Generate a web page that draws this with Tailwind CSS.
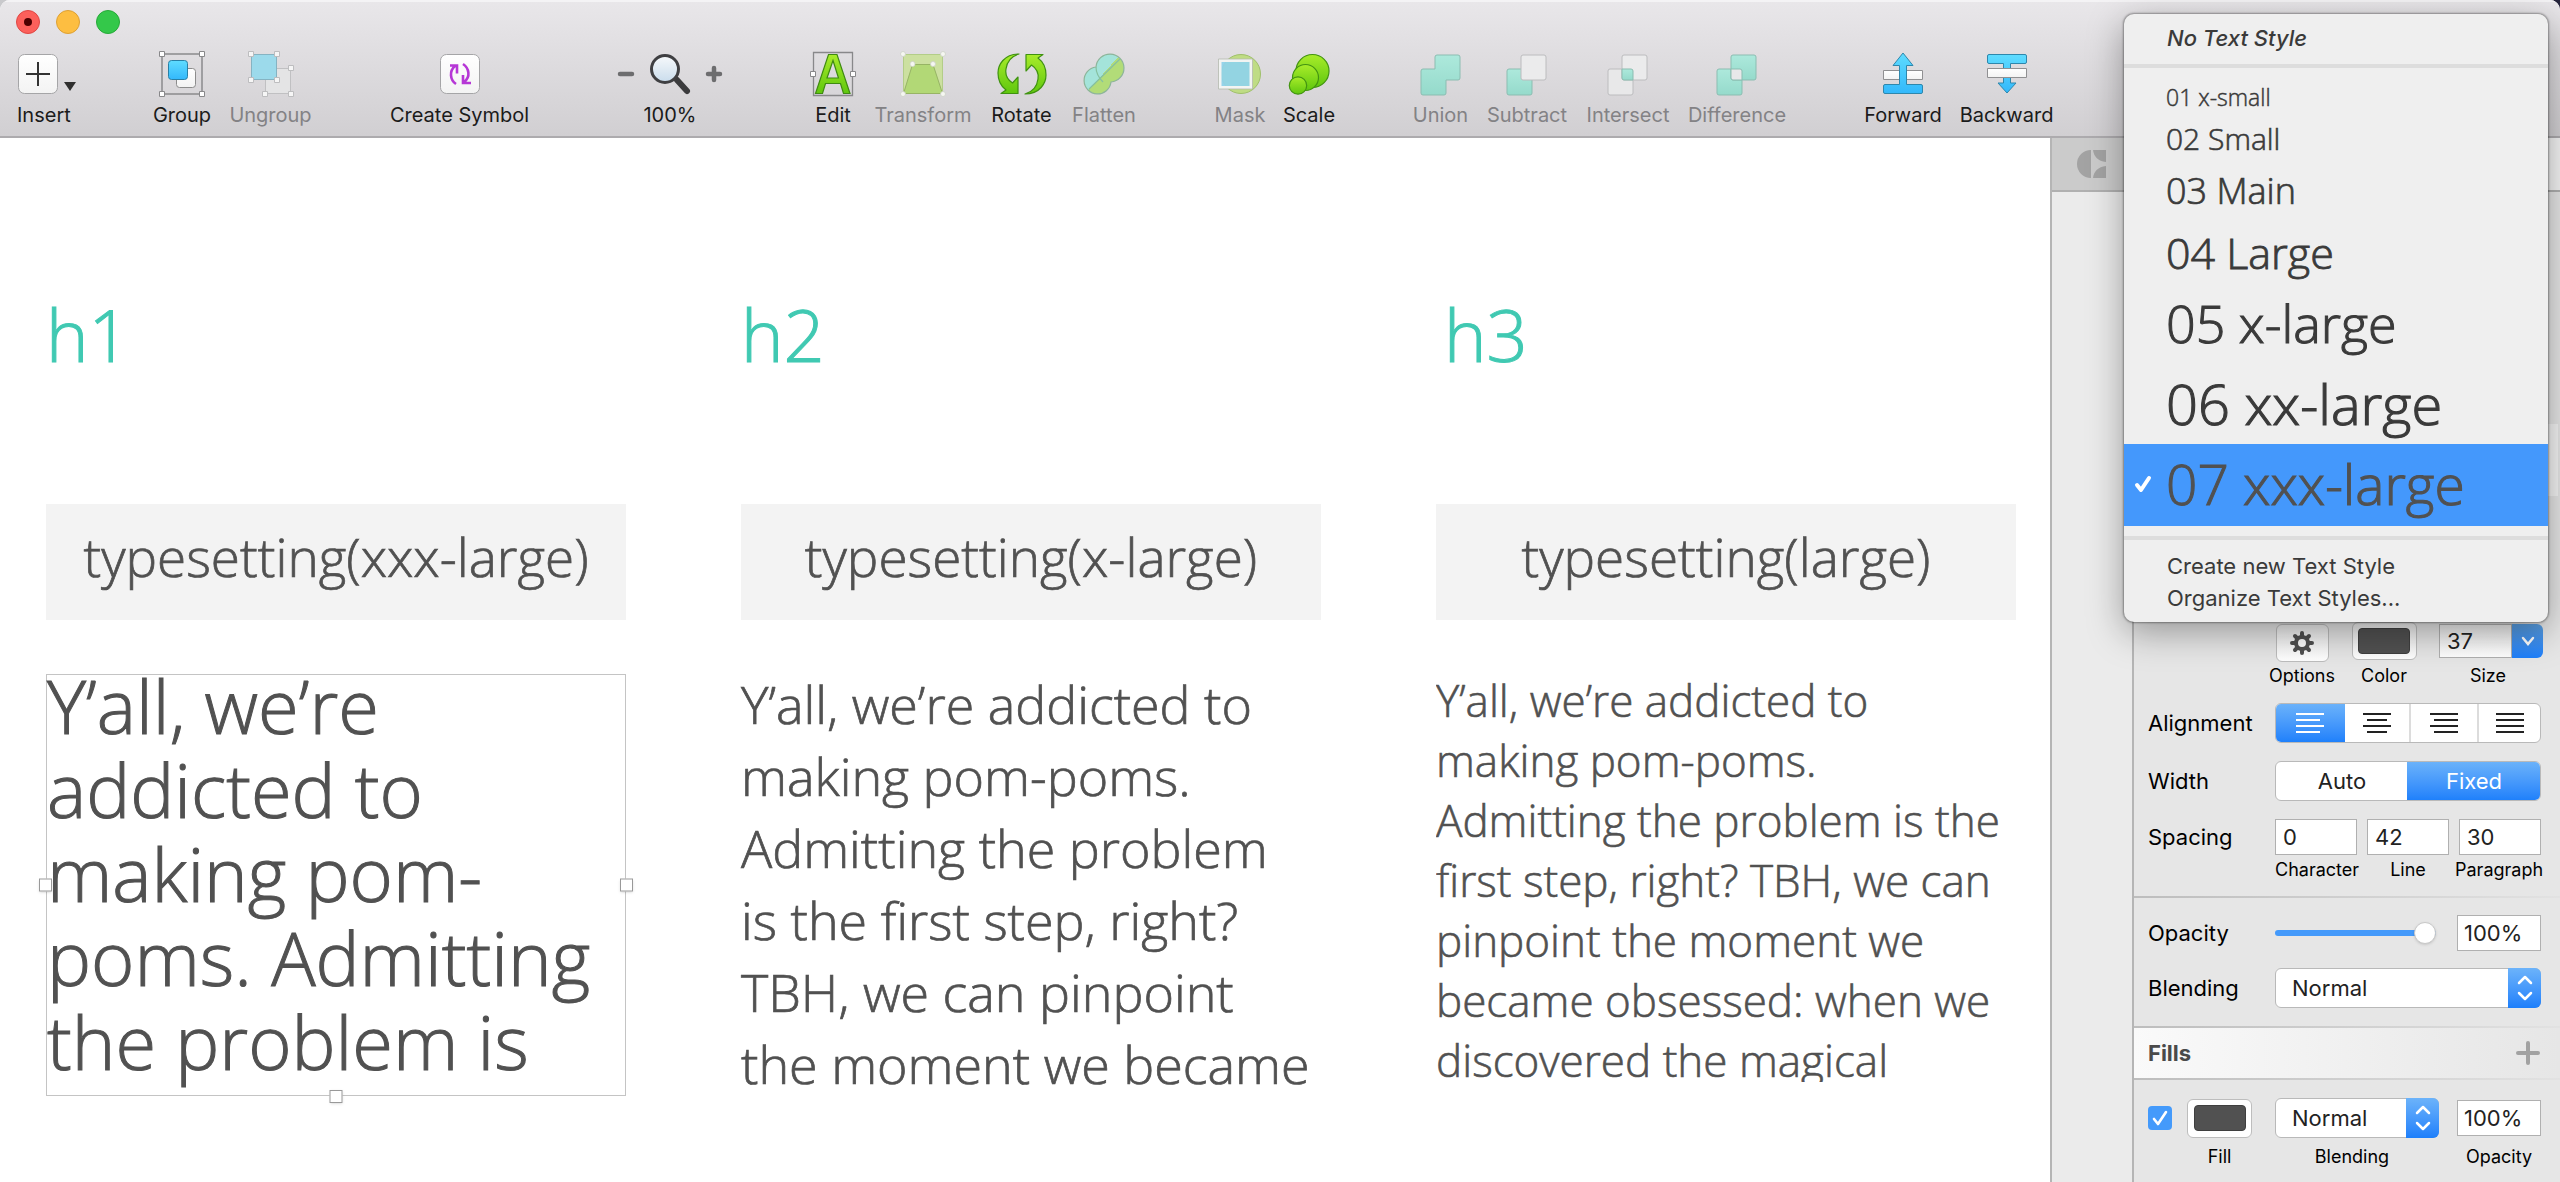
<!DOCTYPE html>
<html lang="en">
<head>
<meta charset="utf-8">
<title>Typesetting styles</title>
<script src="https://cdn.jsdelivr.net/npm/@tailwindcss/browser@4"></script>
</head>
<body class="bg-gradient-to-r from-[#c9c9cc] to-[#25233a] font-['Inter',sans-serif] text-[#1b1b1b]">
<svg width="0" height="0" class="absolute" aria-hidden="true">
  <defs>
    <linearGradient id="green" x1="0" y1="0" x2="0" y2="1"><stop offset="0" stop-color="#a8ec2a"/><stop offset="1" stop-color="#5fc70e"/></linearGradient>
    <linearGradient id="blue" x1="0" y1="0" x2="0" y2="1"><stop offset="0" stop-color="#5fdcff"/><stop offset="1" stop-color="#33b8fb"/></linearGradient>
    <linearGradient id="teal" x1="0" y1="0" x2="0" y2="1"><stop offset="0" stop-color="#ade9dc"/><stop offset="1" stop-color="#95dacb"/></linearGradient>
    <linearGradient id="white" x1="0" y1="0" x2="0" y2="1"><stop offset="0" stop-color="#ffffff"/><stop offset="1" stop-color="#f3f3f3"/></linearGradient>
    <linearGradient id="lens" x1="0" y1="0" x2="0" y2="1"><stop offset="0" stop-color="#f7f9fb"/><stop offset="1" stop-color="#c9dcec"/></linearGradient>
  </defs>
</svg>
<div class="relative flex min-h-screen flex-col overflow-hidden rounded-t-[10px] bg-white">

  <header class="h-[138px] border-b-2 border-[#adabae] bg-gradient-to-b from-[#e9e7ea] to-[#d1cfd2]">
    <div class="flex h-[44px] items-center gap-4 border-t-2 border-[#f4f3f5] pb-[2px] pl-4">
      <button aria-label="Close" class="flex size-6 items-center justify-center rounded-full border border-[#df4744] bg-[#fc605b]"><span class="size-2 rounded-full bg-[#4d0000]"></span></button>
      <button aria-label="Minimize" class="size-6 rounded-full border border-[#dda034] bg-[#fdbe41]"></button>
      <button aria-label="Zoom window" class="size-6 rounded-full border border-[#27a939] bg-[#34c84a]"></button>
    </div>
    <nav class="flex gap-[78px] pl-[17px] text-[20px] leading-6 whitespace-nowrap">
      <div class="flex w-[57px]">
        <button class="flex flex-col items-start gap-[3px]">
          <svg width="62" height="56" viewBox="17 44 62 56"><rect x="18.500" y="54.500" width="39" height="39" rx="6" fill="url(#white)" stroke="#a5a5a7"/><path d="M26 74h24M38 62v24" stroke="#333" stroke-width="2"/><path d="M64 82h12l-6 9z" fill="#2f2f2f"/></svg>
          <span>Insert</span>
        </button>
      </div>
      <div class="flex gap-[18px]">
        <button class="flex w-[60px] flex-col items-center gap-[3px]">
          <svg width="46" height="56" viewBox="159 44 46 56"><path d="M162 54h40v40h-40z" fill="none" stroke="#8a8a8c" stroke-width="1.500"/><rect x="176.500" y="68.500" width="19" height="19" rx="3" fill="url(#white)" stroke="#8c8c8c"/><rect x="168.500" y="60.500" width="19" height="19" rx="3" fill="url(#blue)" stroke="#2880a6"/><g fill="#fff" stroke="#88888a"><path d="M159.500 51.500h5v5h-5zM199.500 51.500h5v5h-5zM159.500 91.500h5v5h-5zM199.500 91.500h5v5h-5z"/></g></svg>
          <span>Group</span>
        </button>
        <button class="flex w-[81px] flex-col items-center gap-[3px] text-[#838285]">
          <svg width="46" height="56" viewBox="247 44 46 56"><rect x="264.500" y="68.500" width="25" height="25" fill="#e4e4e5" stroke="#c0c0c2"/><rect x="250.500" y="54.500" width="25" height="25" fill="#9cdaeb" stroke="#86b3c2"/><g fill="#f6f6f6" stroke="#bdbdbf"><path d="M247.500 51.500h5v5h-5zM273.500 51.500h5v5h-5zM247.500 77.500h5v5h-5zM273.500 77.500h5v5h-5zM287.500 65.500h5v5h-5zM261.500 91.500h5v5h-5zM287.500 91.500h5v5h-5z"/></g></svg>
          <span>Ungroup</span>
        </button>
      </div>
      <button class="flex w-[141px] flex-col items-center gap-[3px]">
        <svg width="42" height="56" viewBox="439 44 42 56"><rect x="440.500" y="54.500" width="39" height="39" rx="6" fill="url(#white)" stroke="#a5a5a7"/><g fill="none" stroke="#b637d6" stroke-width="2.600"><path d="M456 84c-6-4-7-13-1-18M450 65.500h7v8M463 64c6 4 8 13 1 18M471 83h-8v-8"/></g></svg>
        <span>Create Symbol</span>
      </button>
      <div class="flex w-[124px] flex-col items-center gap-[3px]">
        <svg width="108" height="56" viewBox="616 44 108 56"><path d="M620 74h12M708 74h12M714 68v12" stroke="#6d6d6f" stroke-width="4.500" stroke-linecap="round"/><path d="M677 80l10 11" stroke="#3b3b3d" stroke-width="6" stroke-linecap="round"/><circle cx="665" cy="69" r="13.500" fill="url(#lens)" stroke="#3f3f42" stroke-width="3"/></svg>
        <span>100%</span>
      </div>
      <div class="flex gap-[18px]">
        <button class="flex w-[46px] flex-col items-center gap-[3px]">
          <svg width="46" height="56" viewBox="811 44 46 56"><path d="M814.500 52.500h39v43h-39z" fill="none" stroke="#88888a" stroke-width="1.300"/><path d="M816.500 93.500L829.500 54.500h8.500l13 39h-6.500l-3-10h-15l-3 10zM828 78h11.500l-5.500-17.500z" fill="url(#green)" stroke="#3f8a12" stroke-width="1.200"/><path d="M811.500 71.500h5v5h-5zM851.500 71.500h5v5h-5z" fill="#fff" stroke="#88888a"/></svg>
          <span>Edit</span>
        </button>
        <button class="flex w-[98px] flex-col items-center gap-[3px] text-[#838285]">
          <svg width="46" height="56" viewBox="901 44 46 56"><path d="M904.500 54.500h39v39h-39z" fill="#cce0a0" stroke="#b3cd88"/><path d="M913.500 64.500h20.500l9.500 29h-39z" fill="#b2d876" stroke="#97b465"/><g fill="#f6f7f2" stroke="#cdd2c8" stroke-width=".8"><circle cx="904" cy="54" r="2.500"/><circle cx="944" cy="54" r="2.500"/><circle cx="904" cy="94" r="2.500"/><circle cx="944" cy="94" r="2.500"/><circle cx="913.500" cy="64" r="2.500"/><circle cx="934" cy="64" r="2.500"/></g></svg>
          <span>Transform</span>
        </button>
        <button class="flex w-[63px] flex-col items-center gap-[3px]">
          <svg width="50" height="56" viewBox="997 44 50 56"><g fill="url(#green)" stroke="#3f9210" stroke-width="1.200" stroke-linejoin="round"><path d="M1019 54C1004 54 998 65 998 73C998 81 1002 87 1006 90L1001 93.500H1018V77L1012.500 83C1008 80 1005 75 1006 69C1007 61 1012 56 1019 54Z"/><path d="M1025 94C1040 94 1046 83 1046 75C1046 67 1042 61 1038 58L1043 54.500H1026V71L1031.500 65C1036 68 1039 73 1038 79C1037 87 1032 92 1025 94Z"/></g></svg>
          <span>Rotate</span>
        </button>
        <button class="flex w-[66px] flex-col items-center gap-[3px] text-[#838285]">
          <svg width="42" height="56" viewBox="1083 44 42 56"><defs><linearGradient id="split" gradientUnits="userSpaceOnUse" x1="1094" y1="66" x2="1112" y2="82"><stop offset=".5" stop-color="#a4e4da"/><stop offset=".5" stop-color="#b2dc78"/></linearGradient></defs><path d="M1096 67a14 14 0 1 1 15 15a13.500 13.500 0 1 1-15-15z" fill="url(#split)" stroke="#8db59a" stroke-width="1.200"/><path d="M1096 67c0 7 3 11 7 15M1089 89l31-30" fill="none" stroke="#86c0a0" stroke-width="1.200"/></svg>
          <span>Flatten</span>
        </button>
      </div>
      <div class="flex gap-[18px]">
        <button class="flex w-[50px] flex-col items-center gap-[3px] text-[#838285]">
          <svg width="44" height="56" viewBox="1219 44 44 56"><circle cx="1242" cy="74" r="19.500" fill="#bfdc84" stroke="#9fc06b"/><path d="M1221 60.500h31v27h-31z" fill="#8fd3ea" fill-opacity=".92" stroke="#f2f4f2" stroke-width="3"/><path d="M1219.500 59h34v30h-34z" fill="none" stroke="#b4b9ae" stroke-width=".8"/></svg>
          <span>Mask</span>
        </button>
        <button class="flex w-[52px] flex-col items-center gap-[3px]">
          <svg width="42" height="56" viewBox="1289 44 42 56"><g fill="url(#green)" stroke="#439412" stroke-width="1.200"><circle cx="1313.500" cy="71" r="16.500"/><circle cx="1306.500" cy="77.500" r="13"/><circle cx="1299" cy="85.500" r="8.700"/></g></svg>
          <span>Scale</span>
        </button>
      </div>
      <div class="flex gap-[18px] text-[#838285]">
        <button class="flex w-[55px] flex-col items-center gap-[3px]">
          <svg width="42" height="56" viewBox="0 -11 42 56"><path d="M15 2a2 2 0 0 1 2-2H38a2 2 0 0 1 2 2V23a2 2 0 0 1-2 2H26V38a2 2 0 0 1-2 2H3a2 2 0 0 1-2-2V16a2 2 0 0 1 2-2H15z" fill="url(#teal)" stroke="#8bbdb1"/></svg>
          <span>Union</span>
        </button>
        <button class="flex w-[82px] flex-col items-center gap-[3px]">
          <svg width="42" height="56" viewBox="0 -11 42 56"><rect x="1" y="14" width="25" height="26" rx="2" fill="url(#teal)" stroke="#8bbdb1"/><rect x="15" y="0" width="25" height="25" rx="2" fill="#ebebec" stroke="#bcbcbe"/></svg>
          <span>Subtract</span>
        </button>
        <button class="flex w-[84px] flex-col items-center gap-[3px]">
          <svg width="42" height="56" viewBox="0 -11 42 56"><rect x="1" y="14" width="25" height="26" rx="2" fill="#e8e8e9" stroke="#bcbcbe"/><rect x="15" y="0" width="25" height="25" rx="2" fill="#ebebec" stroke="#bcbcbe"/><path d="M15 14h9a2 2 0 0 1 2 2v9h-9a2 2 0 0 1-2-2z" fill="url(#teal)" stroke="#8bbdb1"/></svg>
          <span>Intersect</span>
        </button>
        <button class="flex w-[98px] flex-col items-center gap-[3px]">
          <svg width="42" height="56" viewBox="0 -11 42 56"><rect x="1" y="14" width="25" height="26" rx="2" fill="url(#teal)" stroke="#8bbdb1"/><rect x="15" y="0" width="25" height="25" rx="2" fill="url(#teal)" stroke="#8bbdb1"/><path d="M15 14h9a2 2 0 0 1 2 2v9h-9a2 2 0 0 1-2-2z" fill="#e8e8e9" stroke="#8bbdb1"/></svg>
          <span>Difference</span>
        </button>
      </div>
      <div class="flex gap-[18px]">
        <button class="flex w-[78px] flex-col items-center gap-[3px]">
          <svg width="42" height="56" viewBox="1883 44 42 56"><path d="M1884.500 70.500h39v9h-39z" fill="url(#white)" stroke="#909092"/><path d="M1904 53l10 12.500h-6.500V84.500H1922a1.500 1.500 0 0 1 1.500 1.500v6a1.500 1.500 0 0 1-1.500 1.500h-36a1.500 1.500 0 0 1-1.500-1.500v-6a1.500 1.500 0 0 1 1.500-1.500h14.500V65.500h-6.500z" fill="url(#blue)" stroke="#2e87ac"/></svg>
          <span>Forward</span>
        </button>
        <button class="flex w-[93px] flex-col items-center gap-[3px]">
          <svg width="42" height="56" viewBox="1987 44 42 56"><path d="M1990 54.500h36a1.500 1.500 0 0 1 1.500 1.500v6a1.500 1.500 0 0 1-1.500 1.500h-14.500V83h5.500l-9 10-9-10h5.500V63.500H1990a1.500 1.500 0 0 1-1.500-1.500v-6a1.500 1.500 0 0 1 1.500-1.500z" fill="url(#blue)" stroke="#2e87ac"/><path d="M1988.500 68.500h39v9h-39z" fill="url(#white)" stroke="#909092"/></svg>
          <span>Backward</span>
        </button>
      </div>
    </nav>
  </header>

  <div class="flex flex-1">
    <main class="grid flex-1 grid-cols-3 gap-[115px] pt-[154px] pr-[34px] pl-[46px] font-['Open_Sans',sans-serif] font-light whitespace-nowrap text-[#515151] [-webkit-text-stroke:0.014em]">
      <section>
        <h1 class="text-[72px] leading-[84px] text-[#40c9b2] [-webkit-text-stroke:0.014em]">h1</h1>
        <div class="mt-[128px] flex h-[116px] items-center justify-center bg-[#f3f3f3] pb-[10px] text-[53px] [-webkit-text-stroke:0.014em]">typesetting(xxx-large)</div>
        <div class="relative mt-[54px] h-[422px] border border-[#c4c4c4] text-[74px] leading-[84px] [-webkit-text-stroke:0.014em]">
          <i class="absolute top-1/2 -left-2 size-[13px] -translate-y-1/2 border border-[#999] bg-white shadow"></i>
          <i class="absolute top-1/2 -right-2 size-[13px] -translate-y-1/2 border border-[#999] bg-white shadow"></i>
          <i class="absolute -bottom-2 left-1/2 size-[13px] -translate-x-1/2 border border-[#999] bg-white shadow"></i>
          <p class="relative -mt-[11px]">Y’all, we’re<br>addicted to<br>making pom-<br>poms. Admitting<br>the problem is</p>
        </div>
      </section>
      <section>
        <h2 class="text-[72px] leading-[84px] text-[#40c9b2] [-webkit-text-stroke:0.014em]">h2</h2>
        <div class="mt-[128px] flex h-[116px] items-center justify-center bg-[#f3f3f3] pb-[10px] text-[53px] [-webkit-text-stroke:0.014em]">typesetting(x-large)</div>
        <p class="mt-12 text-[52px] leading-[72px] [-webkit-text-stroke:0.014em]">Y’all, we’re addicted to<br>making pom-poms.<br>Admitting the problem<br>is the first step, right?<br>TBH, we can pinpoint<br>the moment we became</p>
      </section>
      <section>
        <h3 class="pl-2 text-[72px] leading-[84px] text-[#40c9b2] [-webkit-text-stroke:0.014em]">h3</h3>
        <div class="mt-[128px] flex h-[116px] items-center justify-center bg-[#f3f3f3] pb-[10px] text-[53px] [-webkit-text-stroke:0.014em]">typesetting(large)</div>
        <p class="mt-[50px] h-[412px] overflow-hidden text-[44px] leading-[60px] [-webkit-text-stroke:0.014em]">Y’all, we’re addicted to<br>making pom-poms.<br>Admitting the problem is the<br>first step, right? TBH, we can<br>pinpoint the moment we<br>became obsessed: when we<br>discovered the magical</p>
      </section>
    </main>

    <aside class="flex w-[510px] flex-col border-l-2 border-[#b5b5b5] bg-[#ebebeb]">
      <div class="flex h-[54px] items-center justify-between border-b-2 border-[#b0b0b0] bg-[#cbcbcb]">
        <svg width="30" height="30" viewBox="0 0 30 30" class="ml-[25px]" fill="#a3a3a3"><path d="M14 1v28A14 14 0 0 1 14 1zM16 1h13v12C21 12 17 8 16 1zM16 29h13V17C21 18 17 22 16 29z"/></svg>
        <div class="h-[52px] w-24 bg-[#f4f4f4]"></div>
      </div>
      <div class="flex flex-1 pl-[80px]">
        <div class="flex-1 border-l-2 border-[#b5b5b5] bg-[#e6e6e6] text-[22px] leading-7 text-black">
          <div class="flex h-[430px] justify-end pt-[232px] pr-[2px]"><div class="h-[72px] w-24 bg-[#f4f4f4]"></div></div>

          <div class="flex justify-end pr-[17px] text-[18px] leading-6">
            <div class="flex w-[84px] flex-col items-center gap-[2px]">
              <button id="opts" aria-label="Options" class="mt-[2px] flex h-[38px] w-[53px] items-center justify-center rounded-md border border-[#bdbdbd] bg-gradient-to-b from-[#ededed] to-white">
                <svg width="26" height="26" viewBox="-13 -13 26 26"><g stroke="#505050" stroke-width="4" stroke-linecap="round"><path d="M0-10V10M-10 0H10M-7-7L7 7M-7 7L7-7"/></g><circle r="6" fill="#fdfdfd" stroke="#505050" stroke-width="4"/></svg>
              </button>
              <label for="opts">Options</label>
            </div>
            <div class="flex w-[80px] flex-col items-center gap-1">
              <button id="color" aria-label="Color" class="flex h-[38px] w-[65px] items-center justify-center rounded-md border border-[#bdbdbd] bg-gradient-to-b from-[#ededed] to-white"><span class="h-[26px] w-[52px] rounded border border-[#3f3f3f] bg-[#515151]"></span></button>
              <label for="color">Color</label>
            </div>
            <div class="ml-[15px] flex w-[104px] flex-col items-center gap-[6px]">
              <div class="mt-[2px] flex h-[34px] w-full">
                <input id="size" value="37" class="w-[73px] border border-[#b0b0b0] bg-gradient-to-b from-[#ececec] to-white pl-[7px] text-[22px] text-[#222]">
                <button aria-label="Choose size" class="flex flex-1 items-center justify-center rounded-r-md bg-gradient-to-b from-[#5a9ee0] to-[#1c7ffb]"><svg width="14" height="10" viewBox="0 0 14 10" fill="none" stroke="#fff" stroke-width="2.500" stroke-linecap="round"><path d="M2 2l5 6 5-6"/></svg></button>
              </div>
              <label for="size" class="-ml-[6px]">Size</label>
            </div>
          </div>

          <div class="mt-[15px] grid grid-cols-[127px_1fr] items-center gap-y-[18px] pr-[19px] pl-[14px]">
            <span>Alignment</span>
            <div class="grid h-10 grid-cols-[68px_67px_68px_1fr] overflow-hidden rounded-md border border-[#b9b9b9] bg-white">
              <button aria-label="Left" class="-m-px flex items-center justify-center bg-gradient-to-b from-[#6cb3fa] to-[#1c7ffb]"><svg width="28" height="22" stroke="#fff" stroke-width="2"><path d="M0 2h28M0 8h24M0 14h28M0 20h24"/></svg></button>
              <button aria-label="Center" class="flex items-center justify-center border-r-2 border-[#dcdcdc]"><svg width="28" height="22" stroke="#222" stroke-width="2"><path d="M0 2h28M4 8h20M0 14h28M4 20h20"/></svg></button>
              <button aria-label="Right" class="flex items-center justify-center border-r-2 border-[#dcdcdc]"><svg width="28" height="22" stroke="#222" stroke-width="2"><path d="M0 2h28M4 8h24M0 14h28M4 20h24"/></svg></button>
              <button aria-label="Justify" class="flex items-center justify-center"><svg width="28" height="22" stroke="#222" stroke-width="2"><path d="M0 2h28M0 8h28M0 14h28M0 20h28"/></svg></button>
            </div>
            <span>Width</span>
            <div class="grid h-10 grid-cols-2 overflow-hidden rounded-md border border-[#b9b9b9] bg-white">
              <button class="text-[#222]">Auto</button>
              <button class="-m-px bg-gradient-to-b from-[#6cb3fa] to-[#1c7ffb] text-white">Fixed</button>
            </div>
          </div>

          <div class="mt-[18px] grid grid-cols-[127px_82px_82px_82px] items-center gap-y-[3px] pl-[14px]">
            <span>Spacing</span>
            <input id="char" value="0" class="h-9 w-[82px] border border-[#b0b0b0] bg-white pl-[7px] text-[#222]">
            <input id="line" value="42" class="ml-[10px] h-9 w-[82px] border border-[#b0b0b0] bg-white pl-[7px] text-[#222]">
            <input id="para" value="30" class="ml-5 h-9 w-[82px] border border-[#b0b0b0] bg-white pl-[7px] text-[#222]">
            <span></span>
            <label for="char" class="text-[18px] leading-6">Character</label>
            <label for="line" class="ml-[10px] w-[82px] text-center text-[18px] leading-6">Line</label>
            <label for="para" class="ml-4 text-[18px] leading-6">Paragraph</label>
          </div>

          <div class="mt-[14px] h-[2px] bg-gradient-to-r from-[#bdbdbd] to-[#e2e2e2]"></div>

          <div class="mt-[17px] grid grid-cols-[127px_1fr] items-center gap-y-[17px] pr-[19px] pl-[14px]">
            <label for="opacity">Opacity</label>
            <div class="flex items-center justify-between">
              <input id="opacity" type="range" value="100" class="h-6 w-[161px] appearance-none bg-transparent [&::-webkit-slider-runnable-track]:h-[6px] [&::-webkit-slider-runnable-track]:rounded-full [&::-webkit-slider-runnable-track]:bg-[#449afb] [&::-webkit-slider-thumb]:-mt-2 [&::-webkit-slider-thumb]:size-[22px] [&::-webkit-slider-thumb]:appearance-none [&::-webkit-slider-thumb]:rounded-full [&::-webkit-slider-thumb]:border [&::-webkit-slider-thumb]:border-[#c8c8c8] [&::-webkit-slider-thumb]:bg-white [&::-webkit-slider-thumb]:shadow-sm">
              <input aria-label="Opacity value" value="100%" class="h-9 w-[84px] border border-[#b0b0b0] bg-white pl-[6px] text-[#222]">
            </div>
            <label for="blend">Blending</label>
            <div class="relative h-10">
              <select id="blend" class="h-full w-full appearance-none rounded-md border border-[#b9b9b9] bg-white pl-4 text-[#222]"><option>Normal</option></select>
              <span class="pointer-events-none absolute inset-y-0 right-0 flex w-[33px] items-center justify-center rounded-r-md bg-gradient-to-b from-[#6cb3fa] to-[#1c7ffb]"><svg width="16" height="26" viewBox="0 0 16 26" fill="none" stroke="#fff" stroke-width="2.500" stroke-linecap="round" stroke-linejoin="round"><path d="M2 8l6-6 6 6M2 18l6 6 6-6"/></svg></span>
            </div>
          </div>

          <div class="mt-[18px] h-[2px] bg-gradient-to-r from-[#bdbdbd] to-[#e2e2e2]"></div>
          <div class="flex h-[50px] items-center justify-between bg-gradient-to-r from-[#fafafa] to-[#e6e6e6] pr-5 pl-[14px]">
            <h4 class="font-bold text-[#4a4a4a]">Fills</h4>
            <button aria-label="Add fill"><svg width="24" height="24" stroke="#a2a2a2" stroke-width="4" stroke-linecap="round"><path d="M2 12h20M12 2v20"/></svg></button>
          </div>
          <div class="h-[2px] bg-gradient-to-r from-[#bdbdbd] to-[#e2e2e2]"></div>

          <div class="mt-[18px] grid grid-cols-[39px_88px_182px_84px] items-center gap-y-[3px] pl-[14px]">
            <span class="relative size-6">
              <input type="checkbox" checked aria-label="Fill enabled" class="block size-6 appearance-none rounded bg-[#449afb]">
              <svg width="24" height="24" viewBox="0 0 24 24" class="pointer-events-none absolute inset-0" fill="none" stroke="#fff" stroke-width="2.600" stroke-linecap="round" stroke-linejoin="round"><path d="M6 13l4 5 8-12"/></svg>
            </span>
            <button id="fill" aria-label="Fill" class="flex h-[39px] w-[65px] items-center justify-center rounded-md border border-[#bdbdbd] bg-white"><span class="h-[26px] w-[52px] rounded border border-[#3f3f3f] bg-[#515151]"></span></button>
            <div class="relative h-10 w-[164px]">
              <select id="fblend" class="h-full w-full appearance-none rounded-md border border-[#b9b9b9] bg-white pl-4 text-[#222]"><option>Normal</option></select>
              <span class="pointer-events-none absolute inset-y-0 right-0 flex w-[33px] items-center justify-center rounded-r-md bg-gradient-to-b from-[#6cb3fa] to-[#1c7ffb]"><svg width="16" height="26" viewBox="0 0 16 26" fill="none" stroke="#fff" stroke-width="2.500" stroke-linecap="round" stroke-linejoin="round"><path d="M2 8l6-6 6 6M2 18l6 6 6-6"/></svg></span>
            </div>
            <input id="fopac" value="100%" class="h-9 w-[84px] border border-[#b0b0b0] bg-white pl-[6px] text-[#222]">
            <span></span>
            <label for="fill" class="w-[65px] pt-1 text-center text-[18px] leading-6">Fill</label>
            <label for="fblend" class="w-[154px] pt-1 text-center text-[18px] leading-6">Blending</label>
            <label for="fopac" class="pt-1 text-center text-[18px] leading-6">Opacity</label>
          </div>
        </div>
      </div>
    </aside>
  </div>

  <div role="menu" class="absolute top-[14px] right-3 w-[424px] overflow-hidden rounded-[10px] bg-[#efefef] pb-2 text-[22px] text-[#3a3a3a] shadow-[0_0_2px_1px_rgba(0,0,0,0.35),0_10px_36px_rgba(0,0,0,0.35)]">
    <button role="menuitem" class="block h-[50px] w-full pb-[2px] pl-[43px] text-left font-medium italic">No Text Style</button>
    <div class="mb-2 h-1 bg-[#dddddd]"></div>
    <div class="font-['Open_Sans',sans-serif] font-light">
      <button role="menuitem" class="block h-[42px] w-full pl-[42px] text-left text-[23px] leading-[42px] [-webkit-text-stroke:0.02em]">01 x-small</button>
      <button role="menuitem" class="block h-[42px] w-full pl-[42px] text-left text-[30px] leading-[42px] [-webkit-text-stroke:0.02em]">02 Small</button>
      <button role="menuitem" class="block h-[62px] w-full pl-[42px] text-left text-[36px] leading-[62px] [-webkit-text-stroke:0.02em]">03 Main</button>
      <button role="menuitem" class="block h-[62px] w-full pl-[42px] text-left text-[43px] leading-[62px] [-webkit-text-stroke:0.02em]">04 Large</button>
      <button role="menuitem" class="block h-[78px] w-full pl-[42px] text-left text-[52px] leading-[76px] [-webkit-text-stroke:0.02em]">05 x-large</button>
      <button role="menuitem" class="block h-[82px] w-full pl-[42px] text-left text-[56px] leading-[78px] [-webkit-text-stroke:0.02em]">06 xx-large</button>
      <button role="menuitem" class="flex h-[82px] w-full items-center bg-[#4498fc] pb-[2px] pl-[10px] text-left text-[55px] leading-[80px] text-[#515151] [-webkit-text-stroke:0.02em]">
        <svg width="18" height="18" viewBox="0 0 18 18" class="mr-[14px]" fill="none" stroke="#fff" stroke-width="4" stroke-linecap="round" stroke-linejoin="round"><path d="M3 10l4 5 8-12"/></svg>07 xxx-large
      </button>
    </div>
    <div class="mt-[10px] mb-[10px] h-1 bg-[#dddddd]"></div>
    <button role="menuitem" class="block h-8 w-full pl-[43px] text-left">Create new Text Style</button>
    <button role="menuitem" class="block h-8 w-full pl-[43px] text-left">Organize Text Styles...</button>
  </div>
</div>
</body>
</html>
